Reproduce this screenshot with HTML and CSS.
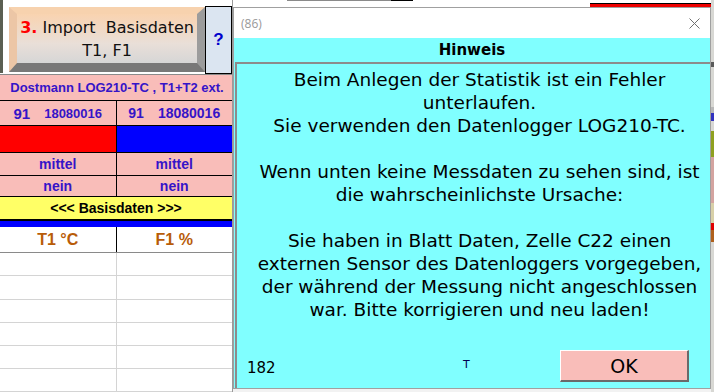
FILE: index.html
```html
<!DOCTYPE html>
<html lang="de">
<head>
    <meta charset="UTF-8">
    <title>Hinweis</title>
    <link rel="stylesheet" href="styles.css">
</head>
<body>
    <div class="sheet">
        <div class="left-col">
            <div class="toolbar">
                <div class="edge"></div>
                <div class="import-btn">
                    <span><b class="step">3.</b> Import&nbsp; Basisdaten</span>
                    <span>T1, F1</span>
                </div>
                <div class="help-btn">?</div>
            </div>

            <div class="row row-title">Dostmann LOG210-TC , T1+T2 ext.</div>
            <div class="row row-serial">
                <div class="cell"><span class="big">91</span><span class="small">18080016</span></div>
                <div class="cell"><span class="big">91</span><span class="big">18080016</span></div>
            </div>
            <div class="row row-colors">
                <div class="cell red"></div>
                <div class="cell blue"></div>
            </div>
            <div class="row row-mittel">
                <div class="cell">mittel</div>
                <div class="cell">mittel</div>
            </div>
            <div class="row row-nein">
                <div class="cell">nein</div>
                <div class="cell">nein</div>
            </div>
            <div class="row row-basis">&lt;&lt;&lt; Basisdaten &gt;&gt;&gt;</div>
            <div class="blue-bar"></div>
            <div class="row row-head">
                <div class="cell">T1 °C</div>
                <div class="cell">F1 %</div>
            </div>
            <div class="grid-row"><div class="cell"></div><div class="cell"></div></div>
            <div class="grid-row"><div class="cell"></div><div class="cell"></div></div>
            <div class="grid-row"><div class="cell"></div><div class="cell"></div></div>
            <div class="grid-row"><div class="cell"></div><div class="cell"></div></div>
            <div class="grid-row"><div class="cell"></div><div class="cell"></div></div>
            <div class="grid-row"><div class="cell"></div><div class="cell"></div></div>
        </div>

        <div class="middle">
            <div class="top-strip">
                <div class="ts-a"></div>
                <div class="ts-b"></div>
                <div class="ts-red"></div>
            </div>
        </div>

        <div class="right-strip">
            <div class="rs rs-light" style="height: 62px"></div>
            <div class="rs rs-dark" style="height: 5px"></div>
            <div class="rs rs-light" style="height: 40px"></div>
            <div class="rs rs-gray" style="height: 6px"></div>
            <div class="rs rs-blue" style="height: 8px"></div>
            <div class="rs rs-light" style="height: 10px"></div>
            <div class="rs rs-olive" style="height: 26px"></div>
            <div class="rs rs-pink" style="height: 46px"></div>
            <div class="rs rs-beige" style="height: 20px"></div>
            <div class="rs rs-red" style="height: 7px"></div>
            <div class="rs rs-brown" style="height: 12px"></div>
            <div class="rs rs-light" style="height: 150px"></div>
        </div>
    </div>

    <!-- message box over the worksheet -->
    <div class="dialog">
        <div class="dialog-title">
            <span class="dialog-id">(86)</span>
            <svg class="close" width="11" height="11" viewBox="0 0 11 11">
                <path d="M0.5 0.5 L10.5 10.5 M10.5 0.5 L0.5 10.5" stroke="#707070" stroke-width="1" fill="none"/>
            </svg>
        </div>
        <div class="dialog-head">Hinweis</div>
        <div class="frame">
            <div class="message">
                Beim Anlegen der Statistik ist ein Fehler<br>
                unterlaufen.<br>
                Sie verwenden den Datenlogger LOG210-TC.<br>
                <br>
                Wenn unten keine Messdaten zu sehen sind, ist<br>
                die wahrscheinlichste Ursache:<br>
                <br>
                Sie haben in Blatt Daten, Zelle C22 einen<br>
                externen Sensor des Datenloggers vorgegeben,<br>
                der während der Messung nicht angeschlossen<br>
                war. Bitte korrigieren und neu laden!
            </div>
            <div class="footer">
                <span class="code">182</span>
                <span class="mark">T</span>
                <button class="ok-btn">OK</button>
            </div>
        </div>
    </div>
</body>
</html>
```

FILE: styles.css
```css
/* Page */
body {
    margin: 0;
    width: 714px;
    height: 392px;
    overflow: hidden;
    position: relative;
    background: #ffffff;
    font-family: 'Liberation Sans', Arial, sans-serif;
}

.sheet {
    display: flex;
    height: 392px;
}

/* Left worksheet column */
.left-col {
    width: 232px;
    border-right: 1px solid #9a9a9a;
    display: flex;
    flex-direction: column;
}

.toolbar {
    display: flex;
    height: 76px;
    border-bottom: 1px solid #8a8a8a;
}

.edge {
    width: 3px;
    height: 73px;
    background: #5b5f52;
}

.import-btn {
    box-sizing: border-box;
    margin: 7px 0 0 6px;
    width: 197px;
    height: 65px;
    border-style: solid;
    border-width: 7px 8px 9px 8px;
    border-color: #f7d2ae #9c9c9c #787878 #ecc6a6;
    background: linear-gradient(#f9d3b0, #e9dfd8 60%, #d6d6d6);
    display: flex;
    flex-direction: column;
    align-items: center;
    justify-content: center;
    font-family: 'DejaVu Sans', Verdana, sans-serif;
    font-size: 16px;
    line-height: 23px;
    color: #111;
}

.step {
    color: #ff0000;
}

.help-btn {
    box-sizing: border-box;
    margin-top: 6px;
    width: 27px;
    height: 68px;
    border: 1px solid #000;
    background: #dbe5f1;
    color: #0000cc;
    font-weight: bold;
    font-size: 17px;
    display: flex;
    align-items: center;
    justify-content: center;
}

.row {
    display: flex;
    background: #f9bdb9;
    border-bottom: 1px solid #000;
    color: #3514c8;
    font-weight: bold;
    font-size: 13px;
}

.row .cell {
    flex: 1;
    display: flex;
    align-items: center;
    justify-content: center;
}

.row .cell:first-child {
    border-right: 1px solid #000;
}

.row-title {
    height: 26px;
    align-items: center;
    justify-content: center;
    padding-left: 2px;
}

.row-serial {
    height: 25px;
}

.row-serial .cell {
    gap: 14px;
}

.big {
    font-size: 15px;
}

.row-serial .cell + .cell .big {
    font-size: 14px;
}

.small {
    font-size: 13px;
}

.row-colors {
    height: 27px;
}

.red {
    background: #ff0000;
}

.blue {
    background: #0000ff;
}

.row-mittel {
    height: 23px;
    font-size: 14px;
}

.row-nein {
    height: 21px;
    font-size: 14px;
}

.row-basis {
    height: 23px;
    background: #ffff66;
    color: #000;
    font-size: 14px;
    align-items: center;
    justify-content: center;
    border-bottom: 2px solid #000;
}

.blue-bar {
    height: 6px;
    background: #0000ff;
}

.row-head {
    height: 26px;
    background: #ffffff;
    color: #b85c08;
    font-size: 16px;
    border-bottom: 1px solid #8a8a8a;
}

.grid-row {
    display: flex;
    height: 23px;
    border-bottom: 1px solid #d4d4d4;
}

.grid-row .cell {
    flex: 1;
}

.grid-row .cell:first-child {
    border-right: 1px solid #d4d4d4;
}

/* Area under the dialog */
.middle {
    flex: 1;
    background: #f2f2f2;
}

.top-strip {
    display: flex;
    height: 7px;
    background: #ffffff;
}

.ts-a {
    margin-left: 54px;
    width: 104px;
    height: 1px;
    background: #8a8a8a;
}

.ts-b {
    width: 22px;
    height: 1px;
    background: #000;
}

.ts-red {
    margin: 3px 0 0 177px;
    flex: 1;
    height: 3px;
    border-top: 1px solid #000;
    background: #ee0000;
}

.right-strip {
    width: 3px;
    display: flex;
    flex-direction: column;
}

.rs-light { background: #d8d8d4; }
.rs-dark { background: #5a5a5a; }
.rs-gray { background: #b8b8b8; }
.rs-blue { background: #3232c0; }
.rs-olive { background: #8fa020; }
.rs-pink { background: #d4a4a0; }
.rs-beige { background: #d8d0a8; }
.rs-red { background: #e00000; }
.rs-brown { background: #b0601c; }

/* Dialog */
.dialog {
    position: absolute;
    left: 233px;
    top: 7px;
    width: 478px;
    height: 382px;
    box-sizing: border-box;
    border: 1px solid #a0a0a0;
    background: #80ffff;
    display: flex;
    flex-direction: column;
    font-family: 'DejaVu Sans', Verdana, sans-serif;
}

.dialog-title {
    flex-shrink: 0;
    height: 30px;
    background: #ffffff;
    display: flex;
    align-items: center;
    justify-content: space-between;
    padding: 0 10px 0 7px;
}

.dialog-id {
    font-family: 'Open Sans', 'Segoe UI', sans-serif;
    font-size: 12px;
    color: #999;
}

.close {
    margin-top: 1px;
}

.dialog-head {
    flex-shrink: 0;
    height: 24px;
    display: flex;
    align-items: center;
    justify-content: center;
    font-weight: bold;
    font-size: 15px;
    color: #000;
}

.frame {
    flex: 1;
    min-height: 0;
    margin-left: 1px;
    border-top: 2px solid #8c8c8c;
    border-left: 2px solid #8c8c8c;
    display: flex;
    flex-direction: column;
    padding-bottom: 6px;
}

.message {
    padding: 4px 0 0 12px;
    text-align: center;
    white-space: nowrap;
    font-size: 18.5px;
    line-height: 23px;
    color: #000;
}

.footer {
    margin-top: auto;
    flex-shrink: 0;
    display: flex;
    align-items: center;
    height: 32px;
}

.code {
    margin-left: 10px;
    width: 26px;
    font-size: 15px;
    padding-top: 4px;
}

.mark {
    margin-left: 190px;
    width: 8px;
    font-size: 11px;
    color: #000050;
    padding-bottom: 4px;
}

.ok-btn {
    margin-left: 89px;
    width: 129px;
    height: 32px;
    background: #f9bdb9;
    border: none;
    border-top: 1px solid #ffffff;
    border-left: 1px solid #ffffff;
    border-right: 2px solid #6a6a6a;
    border-bottom: 2px solid #6a6a6a;
    font-family: 'DejaVu Sans', Verdana, sans-serif;
    font-size: 19px;
    color: #000;
    padding: 0;
}
```
